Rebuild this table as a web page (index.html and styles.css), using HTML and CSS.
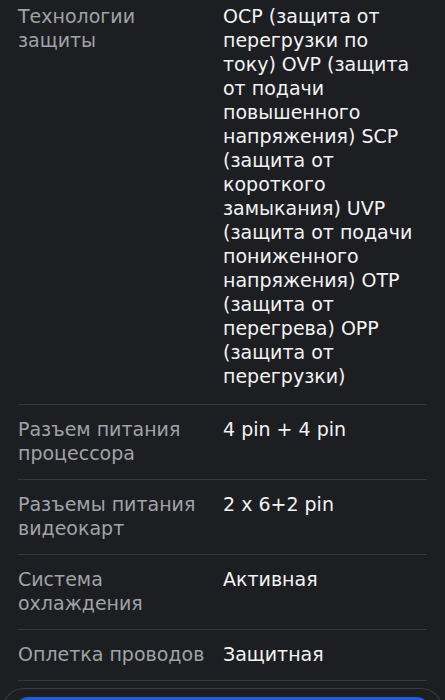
FILE: index.html
```html
<!DOCTYPE html>
<html lang="ru">
<head>
    <meta charset="UTF-8">
    <meta name="viewport" content="width=device-width, initial-scale=1.0">
    <title>Характеристики</title>
    <link rel="stylesheet" href="styles.css">
</head>
<body>
    <div class="specs">
        <div class="spec-row first">
            <div class="spec-name">Технологии защиты</div>
            <div class="spec-value">OCP (защита от перегрузки по току) OVP (защита от подачи повышенного напряжения) SCP (защита от короткого замыкания) UVP (защита от подачи пониженного напряжения) OTP (защита от перегрева) OPP (защита от перегрузки)</div>
        </div>
        <div class="spec-row">
            <div class="spec-name">Разъем питания процессора</div>
            <div class="spec-value">4 pin + 4 pin</div>
        </div>
        <div class="spec-row">
            <div class="spec-name">Разъемы питания видеокарт</div>
            <div class="spec-value">2 x 6+2 pin</div>
        </div>
        <div class="spec-row">
            <div class="spec-name">Система охлаждения</div>
            <div class="spec-value">Активная</div>
        </div>
        <div class="spec-row">
            <div class="spec-name">Оплетка проводов</div>
            <div class="spec-value">Защитная</div>
        </div>
    </div>
    <div class="bottom-bar">
        <button class="buy-button" aria-label="В корзину"></button>
    </div>
</body>
</html>
```
FILE: styles.css
```css
body {
    margin: 0;
    background-color: #1d1e22;
    font-family: "DejaVu Sans", sans-serif;
    font-size: 19px;
    line-height: 24px;
    overflow: hidden;
}
.specs {
    padding: 0 18px;
}
.spec-row {
    display: grid;
    grid-template-columns: 190px 1fr;
    column-gap: 15px;
    padding: 12px 0 14px;
    border-bottom: 1px solid #36383c;
}
.spec-row.first {
    padding-top: 4px;
    padding-bottom: 16px;
}
.spec-name {
    color: #a0a3a8;
}
.spec-value {
    color: #f4f4f5;
}
.bottom-bar {
    margin: 7px 2px 0;
    padding: 8px 13px 20px;
    border: 1.5px solid #3a3c40;
    border-bottom: none;
    border-radius: 22px 22px 0 0;
}
.buy-button {
    display: block;
    width: 100%;
    height: 52px;
    border: none;
    border-radius: 12px;
    background-color: #1b5cf5;
}
```
